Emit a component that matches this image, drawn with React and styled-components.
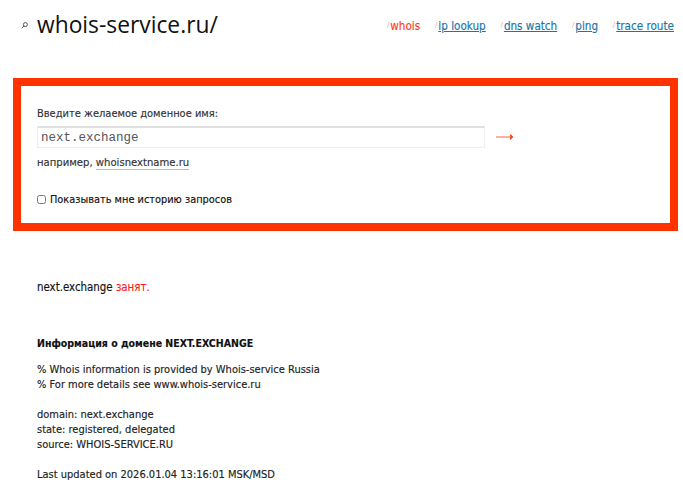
import React from "react";
import styled, { createGlobalStyle } from "styled-components";

const Global = createGlobalStyle`
  html, body { margin: 0; padding: 0; background: #fff; }
  body { font-family: "DejaVu Sans Condensed", "DejaVu Sans", sans-serif; font-size: 11px; line-height: 15px; color: #111; overflow: hidden; -webkit-text-stroke: 0.15px currentColor; }
`;
const Page = styled.div`width: 683px; height: 484px; overflow: hidden;`;
const Header = styled.header`
  height: 78px; display: flex; justify-content: space-between; align-items: flex-start;
  padding: 0 9px 0 21px; box-sizing: border-box;
`;
const Brand = styled.div`display: flex; align-items: center; gap: 9px; padding-top: 7px;`;
const Title = styled.h1`margin: 0; font: 400 22.8px/36px "Open Sans", sans-serif; color: #111; -webkit-text-stroke: 0;`;
const Nav = styled.nav`display: flex; gap: 15px; padding-top: 18px;`;
const NavItem = styled.span`
  font-size: 11.6px; line-height: 15px;
  &::before { content: "/"; font-size: 7px; color: #ff8a70; vertical-align: 3px; margin-right: 1px; -webkit-text-stroke: 0; }
`;
const NavLink = styled.a`
  color: ${p => p.$active ? "#ff3c1e" : "#1a76a6"};
  text-decoration: ${p => p.$active ? "none" : "underline"};
`;
const SearchBox = styled.form`
  width: 665px; height: 153px; margin-left: 13px; box-sizing: border-box;
  border: 8px solid #ff3300; padding: 20px 16px 0;
`;
const Label = styled.div`height: 15px; color: #333;`;
const InputRow = styled.div`display: flex; align-items: center; gap: 11px; margin-top: 5px;`;
const Input = styled.input`
  width: 448px; height: 22px; box-sizing: border-box; padding: 0 4px 0 3px;
  border: 1px solid #eeeef2; border-top: 2px solid #e0e0e0;
  font: 12.5px "Liberation Mono", monospace; color: #555; outline: none; -webkit-text-stroke: 0;
`;
const Hint = styled.div`margin-top: 7px; color: #333; font-size: 11.2px;`;
const HintLink = styled.a`color: #333; text-decoration: none; border-bottom: 1px solid #bbb;`;
const CheckRow = styled.label`display: flex; align-items: center; gap: 4px; margin-top: 22px; color: #111; font-size: 10.9px;`;
const Check = styled.input`width: 9px; height: 9px; margin: 0;`;
const Status = styled.p`margin: 49px 0 0 37px; font-size: 11.4px;`;
const Busy = styled.span`color: #ff1a1a;`;
const Result = styled.h2`margin: 41px 0 0 37px; font: 700 10.5px/15px "DejaVu Sans Condensed", "DejaVu Sans", sans-serif;`;
const Pre = styled.pre`margin: 11px 0 0 37px; font: inherit; color: #222;`;

const Glass = () => (
  <svg width="7" height="7" viewBox="0 0 7 7" fill="none" stroke="#555" strokeWidth="1">
    <circle cx="4.4" cy="2.6" r="2" />
    <path d="M3 4 L.7 6.3" />
  </svg>
);
const Arrow = () => (
  <svg width="18" height="10" viewBox="0 0 18 10" fill="#ff3c1e" stroke="#ff5a38">
    <path d="M0 5H16.5" />
    <path d="M14.5 2.5 L17 5 L14.5 7.5 Z" />
  </svg>
);

export default function App() {
  return (
    <Page>
      <Global />
      <Header>
        <Brand><Glass /><Title>whois-service.ru/</Title></Brand>
        <Nav>
          <NavItem><NavLink $active>whois</NavLink></NavItem>
          <NavItem><NavLink href="#">ip lookup</NavLink></NavItem>
          <NavItem><NavLink href="#">dns watch</NavLink></NavItem>
          <NavItem><NavLink href="#">ping</NavLink></NavItem>
          <NavItem><NavLink href="#">trace route</NavLink></NavItem>
        </Nav>
      </Header>
      <SearchBox>
        <Label>Введите желаемое доменное имя:</Label>
        <InputRow><Input defaultValue="next.exchange" /><Arrow /></InputRow>
        <Hint>например, <HintLink href="#">whoisnextname.ru</HintLink></Hint>
        <CheckRow><Check type="checkbox" />Показывать мне историю запросов</CheckRow>
      </SearchBox>
      <Status>next.exchange <Busy>занят.</Busy></Status>
      <Result>Информация о домене NEXT.EXCHANGE</Result>
      <Pre>{`% Whois information is provided by Whois-service Russia
% For more details see www.whois-service.ru

domain: next.exchange
state: registered, delegated
source: WHOIS-SERVICE.RU

Last updated on 2026.01.04 13:16:01 MSK/MSD`}</Pre>
    </Page>
  );
}
